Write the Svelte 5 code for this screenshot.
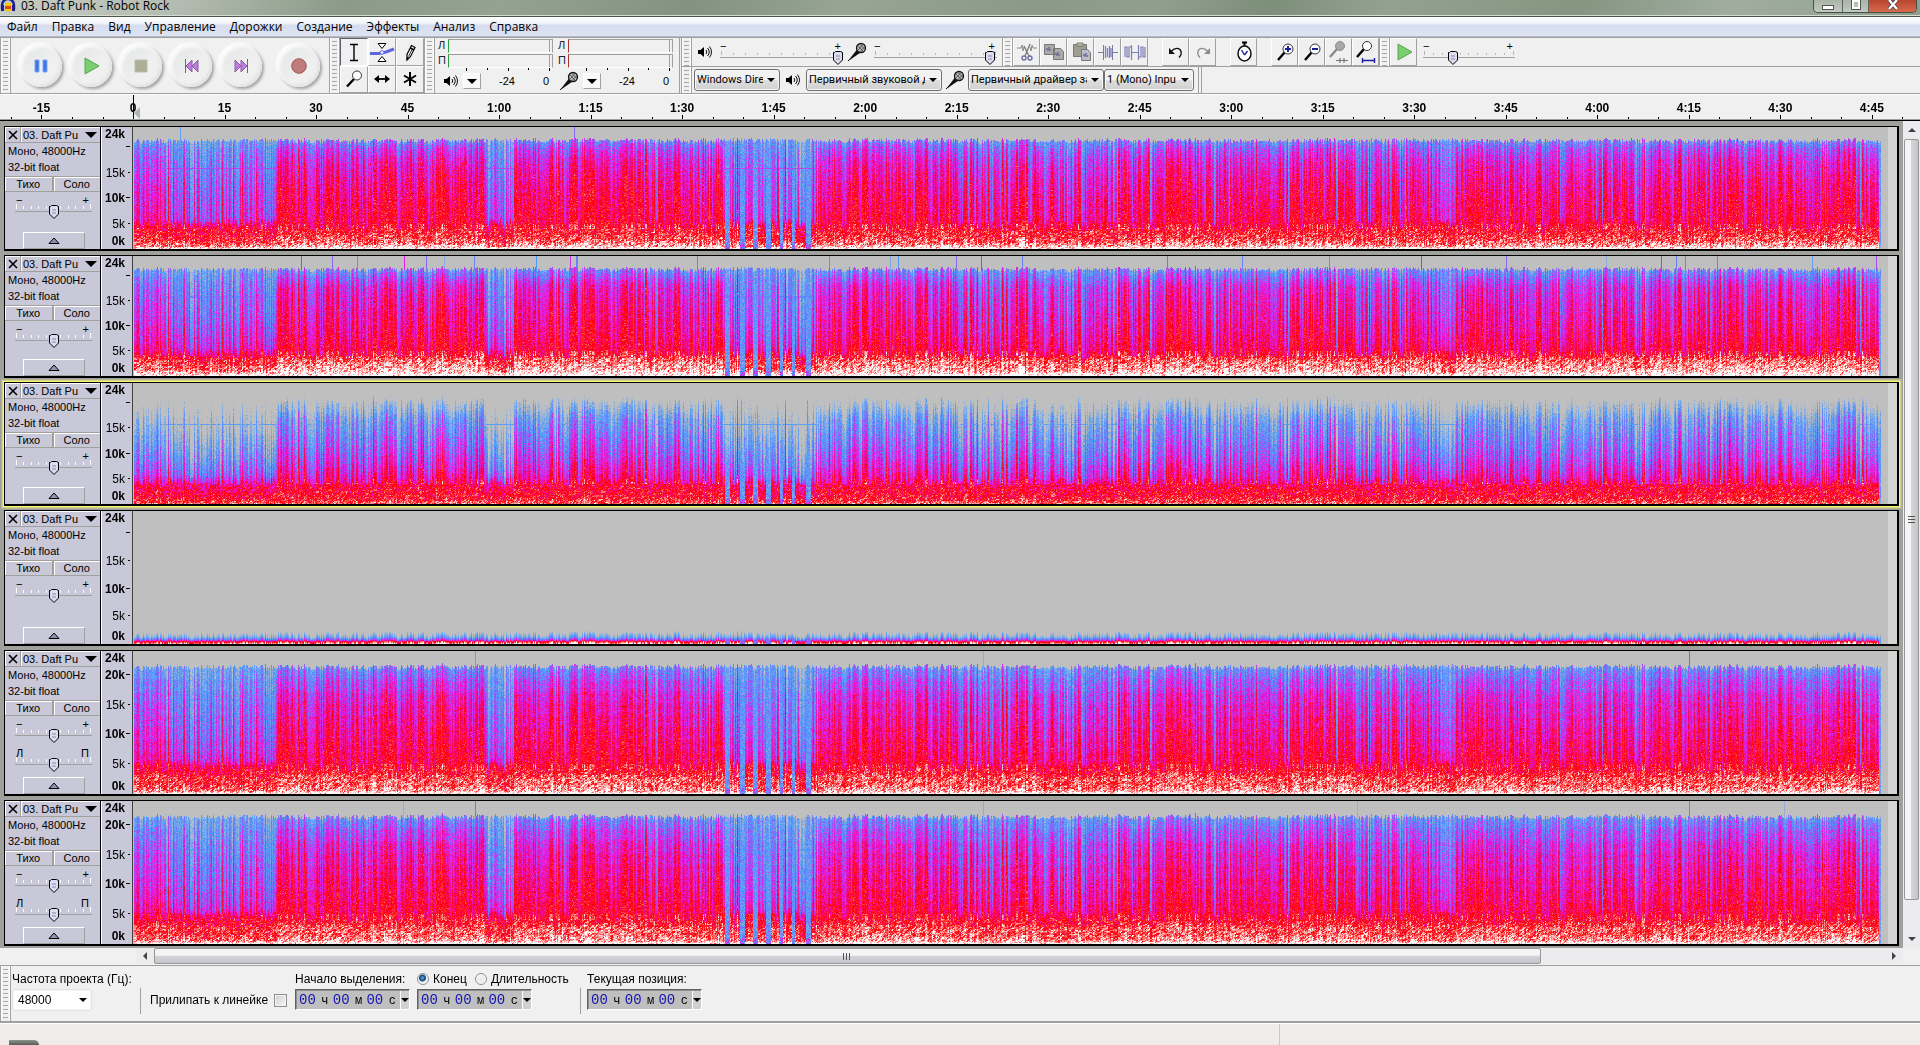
<script lang="ts">
  type Curve = [number, number][];
  type Profile = { loud: Curve; quiet: Curve; gain: number; lowGain: number; grain: number; hum: number; bands: number; cut: number };
  type Track = { id: number; height: number; profile: Profile; pan: boolean; focused?: boolean; marks: [number, number][] };

  const menus = ['Файл', 'Правка', 'Вид', 'Управление', 'Дорожки', 'Создание', 'Эффекты', 'Анализ', 'Справка'];

  const transport = [
    { name: 'Пауза', icon: 'pause' },
    { name: 'Воспроизвести', icon: 'play' },
    { name: 'Остановить', icon: 'stop' },
    { name: 'К началу', icon: 'start' },
    { name: 'К концу', icon: 'end' },
    { name: 'Записать', icon: 'record' },
  ];

  const tools = [
    { name: 'Выделение', icon: 'ibeam' },
    { name: 'Огибающая', icon: 'envelope' },
    { name: 'Карандаш', icon: 'pencil' },
    { name: 'Масштаб', icon: 'lens' },
    { name: 'Перемещение', icon: 'shift' },
    { name: 'Мультиинструмент', icon: 'multi' },
  ];

  const editGroups = [
    [
      { name: 'Вырезать', icon: 'cut' },
      { name: 'Копировать', icon: 'copy' },
      { name: 'Вставить', icon: 'paste' },
      { name: 'Обрезать', icon: 'trim' },
      { name: 'Заглушить', icon: 'silence' },
    ],
    [
      { name: 'Отменить', icon: 'undo' },
      { name: 'Повторить', icon: 'redo' },
    ],
    [{ name: 'Синхронизация', icon: 'sync' }],
    [
      { name: 'Приблизить', icon: 'zoomin' },
      { name: 'Отдалить', icon: 'zoomout' },
      { name: 'Уместить выделение', icon: 'fitsel' },
      { name: 'Уместить проект', icon: 'fit' },
    ],
  ];

  const main: Profile = {
    loud: [[0, 1.05], [0.4, 0.97], [1.2, 0.85], [3.5, 0.77], [5, 0.71], [9, 0.67], [13, 0.61], [17, 0.53], [20, 0.4], [21.3, 0.27]],
    quiet: [[0, 1.05], [0.5, 0.85], [2, 0.74], [4.6, 0.68], [5.6, 0.38], [12, 0.31], [16, 0.25], [21.3, 0.17]],
    gain: 0.17, lowGain: 0.05, grain: 0.14, hum: 0.24, bands: 0, cut: 21.3,
  };
  const bright: Profile = {
    loud: [[0, 1.05], [1, 0.94], [3.4, 0.85], [4.2, 0.73], [9, 0.63], [14, 0.57], [18, 0.5], [20, 0.36], [21.3, 0.26]],
    quiet: [[0, 1.05], [1, 0.82], [3.6, 0.71], [5.4, 0.45], [12, 0.29], [21.3, 0.17]],
    gain: 0.19, lowGain: 0.05, grain: 0.13, hum: 0.1, bands: 0, cut: 21.3,
  };
  const soft: Profile = {
    loud: [[0, 0.85], [1, 0.75], [3.5, 0.71], [5, 0.59], [9, 0.44], [13, 0.32], [17, 0.2], [20, -0.02], [21, -0.22]],
    quiet: [[0, 0.85], [1, 0.72], [4, 0.58], [5.4, 0.32], [9, 0.16], [13, 0.02], [21, -0.3]],
    gain: 0.22, lowGain: 0.04, grain: 0.13, hum: 0.04, bands: 0, cut: 21,
  };
  const bass: Profile = {
    loud: [[0, 0.95], [0.45, 0.72], [0.7, 0.42], [1.2, 0.16], [2, -0.05], [3, -0.5]],
    quiet: [[0, 0.95], [0.45, 0.68], [0.7, 0.38], [1.2, 0.13], [2, -0.1], [3, -0.5]],
    gain: 0.22, lowGain: 0.22, grain: 0.05, hum: 0, bands: 0, cut: 3,
  };
  const banded: Profile = {
    loud: [[0, 1.05], [0.5, 0.9], [3.2, 0.81], [4, 0.73], [8, 0.66], [12, 0.59], [16, 0.52], [20, 0.35], [21.3, 0.24]],
    quiet: [[0, 1.05], [0.5, 0.8], [3.2, 0.73], [4.6, 0.66], [5.8, 0.42], [10, 0.31], [21.3, 0.14]],
    gain: 0.16, lowGain: 0.05, grain: 0.13, hum: 0.04, bands: 0.02, cut: 21.3,
  };

  const tracks: Track[] = [
    { id: 1, height: 125, profile: main, pan: false, marks: [[46, 0.2], [440, 0.35]] },
    {
      id: 2, height: 123, profile: bright, pan: false,
      marks: [[167, 0.45], [198, 0.35], [223, 0.25], [270, 0.5], [292, 0.35], [310, 0.12], [340, 0.3], [402, 0.25], [436, 0.45], [442, 0.3], [563, 0.3],
        [695, 0.25], [756, 0.15], [764, 0.25], [822, 0.35], [847, 0.45], [888, 0.3], [893, 0.5], [1017, 0.2], [1033, 0.35], [1108, 0.3], [1195, 0.25],
        [1287, 0.5], [1372, 0.35], [1472, 0.12], [1527, 0.45], [1542, 0.3], [1551, 0.3], [1583, 0.3], [1678, 0.2], [1742, 0.4]],
    },
    { id: 3, height: 124, profile: soft, pan: false, focused: true, marks: [] },
    { id: 4, height: 136, profile: bass, pan: false, marks: [] },
    { id: 5, height: 146, profile: banded, pan: true, marks: [[341, 0.2], [849, 0.12], [1555, 0.4]] },
    { id: 6, height: 146, profile: banded, pan: true, marks: [[269, 0.1], [341, 0.35], [849, 0.12], [1223, 0.1], [1555, 0.3], [1650, 0.1]] },
  ];

  // clip length in analysis columns and in seconds
  const COLUMNS = 1747;
  const SECONDS = 286.5;

  const sections = [
    { to: 27, level: 0.6, spikes: 0.12, dips: 0 },
    { to: 126, level: 0.08, spikes: 0.26, dips: 0 },
    { to: 142, level: 0.2, spikes: 0, dips: 0 },
    { to: 352, level: 1, spikes: 0.14, dips: 0.05 },
    { to: 380, level: 0.2, spikes: 0, dips: 0 },
    { to: 589, level: 1, spikes: 0.14, dips: 0.05 },
    { to: 684, level: 0.16, spikes: 0.12, dips: 0 },
    { to: 796, level: 0.94, spikes: 0.12, dips: 0.05 },
    { to: 996, level: 0.9, spikes: 0.16, dips: 0.27 },
    { to: 1216, level: 0.98, spikes: 0.12, dips: 0.06 },
    { to: 1306, level: 0.8, spikes: 0.14, dips: 0.36 },
    { to: 1322, level: 0.2, spikes: 0, dips: 0 },
    { to: 1426, level: 0.96, spikes: 0.12, dips: 0.06 },
    { to: 1522, level: 0.86, spikes: 0.14, dips: 0.27 },
    { to: COLUMNS, level: 0.98, spikes: 0.14, dips: 0.05 },
  ];
  const breaks = [593, 608, 621, 634, 647, 659, 674];

  const stops = [
    [191, 191, 191],
    [77, 153, 255],
    [230, 26, 230],
    [255, 0, 0],
    [255, 255, 255],
  ];

  function hash(a: number, b: number) {
    let n = Math.imul(a + 374761, 668265263) ^ Math.imul(b + 1013, 2246822519);
    n = Math.imul(n ^ (n >>> 13), 1274126177);
    n = Math.imul(n ^ (n >>> 15), 2246822519);
    return ((n ^ (n >>> 16)) >>> 0) / 4294967296;
  }

  function sample(curve: Curve, f: number) {
    for (let i = 1; i < curve.length; i++) {
      if (f <= curve[i][0]) {
        const [f0, v0] = curve[i - 1];
        const [f1, v1] = curve[i];
        return v0 + ((v1 - v0) * (f - f0)) / (f1 - f0);
      }
    }
    return curve[curve.length - 1][1];
  }

  function columnLevel(c: number) {
    const s = sections.find((it) => c < it.to) ?? sections[sections.length - 1];
    let level = s.level;
    if (hash(c, 11) < s.spikes) level = Math.max(level, 0.65) + 0.45 * hash(c, 12);
    else if (hash(c >> 1, 13) < s.dips) level = 0.1 + 0.5 * hash(c >> 1, 15);
    return level;
  }

  function spectrogram(canvas: HTMLCanvasElement, track: Track) {
    const w = (canvas.width = canvas.clientWidth);
    const h = (canvas.height = canvas.clientHeight);
    const ctx = canvas.getContext('2d');
    if (!ctx || !w || !h) return;
    const img = ctx.createImageData(w, h);
    const p = track.profile;
    const rows = Array.from({ length: h }, (_, y) => {
      const f = 24 * (1 - (y + 0.5) / h);
      const band = p.bands * Math.sin(f * 3.1);
      return { f, loud: sample(p.loud, f) + band, quiet: sample(p.quiet, f) + band };
    });
    for (let x = 0; x < w; x++) {
      const c = Math.floor((x / w) * COLUMNS);
      const level = columnLevel(c);
      const drift = 0.7 * hash(c, 1) + 0.4 * hash(c >> 1, 2) + 0.12 * hash(c >> 3, 3) - 0.61;
      const shift = p.cut > 5 ? Math.round((hash(c, 7) - 0.5) * 7) : 0;
      const broken = breaks.some((b) => Math.abs(c - b) < 1 + hash(b, 5) * 2);
      const tail = c > COLUMNS - 3;
      const mark = track.marks.find((m) => m[0] === c);
      const top = p.cut + drift * 1.1;
      for (let y = 0; y < h; y++) {
        const f = rows[y].f;
        const { loud, quiet } = rows[f > 0.7 ? Math.max(0, Math.min(h - 1, y + shift)) : y];
        let v = 0;
        if (f < top) {
          v = quiet + (loud - quiet) * (f < 4.5 ? Math.min(level, 1) : level);
          v += drift * 2 * (f < 4 ? p.lowGain : p.gain);
          if (f > 5) v = Math.min(v, 0.74);
          if (broken) v = Math.min(v, f < 1 ? 0.35 : 0.24);
          if (tail) v = Math.min(v, 0.22);
          // low notes smear diagonally across neighbouring columns
          const low = f < 4.2 && p.grain > 0.1 ? (hash((c + y) >> 1, y >> 1) - 0.5) * 0.2 : 0;
          v += (hash(c, y + track.id * 977) + hash(y, c + track.id * 53) - 1) * p.grain + low;
          if (Math.abs(f - 15.8) < 0.14 && level < 0.5) v = Math.max(v, 0.18 + p.hum);
        } else if (mark) {
          v = mark[1];
        }
        const t = Math.max(0, Math.min(0.9999, v)) * 4;
        const i = Math.floor(t);
        const k = t - i;
        const o = (y * w + x) * 4;
        for (let n = 0; n < 3; n++) img.data[o + n] = stops[i][n] + (stops[i + 1][n] - stops[i][n]) * k;
        img.data[o + 3] = 255;
      }
    }
    ctx.putImageData(img, 0, 0);
  }

  const timeTicks = Array.from({ length: 63 }, (_, i) => (i - 4) * 5).filter((t) => t <= 290);
  const freqs = [20, 15, 10, 5];

  function timeLabel(t: number) {
    if (t < 60) return String(t);
    return `${Math.floor(t / 60)}:${String(t % 60).padStart(2, '0')}`;
  }

  let tool = $state('ibeam');
  let endMode = $state('end');
</script>

{#snippet glyph(name: string)}
  {#if name === 'pause'}
    <svg viewBox="0 0 20 20" width="20" height="20"><path d="M4 4h4v12H4zM12 4h4v12h-4z" fill="#3d74e8" stroke="#7ea6f5" /></svg>
  {:else if name === 'play'}
    <svg viewBox="0 0 20 20" width="20" height="20"><path d="M4 2v16l14-8z" fill="#77cf6d" stroke="#5aa456" /></svg>
  {:else if name === 'stop'}
    <svg viewBox="0 0 20 20" width="20" height="20"><path d="M4 4h12v12H4z" fill="#aead98" stroke="#bdbcab" /></svg>
  {:else if name === 'start'}
    <svg viewBox="0 0 20 20" width="20" height="20"><path d="M4.500 3v14" stroke="#7c5b8a" /><path d="M11 4v12l-6-6zM17 4v12l-6-6z" fill="#c07be0" stroke="#8a5fa0" /></svg>
  {:else if name === 'end'}
    <svg viewBox="0 0 20 20" width="20" height="20"><path d="M16.500 3v14" stroke="#7c5b8a" /><path d="M4 4v12l6-6zM10 4v12l6-6z" fill="#c07be0" stroke="#8a5fa0" /></svg>
  {:else if name === 'record'}
    <svg viewBox="0 0 20 20" width="20" height="20"><circle cx="10" cy="10" r="7.300" fill="#bf7c7c" stroke="#a05555" /></svg>
  {:else if name === 'ibeam'}
    <svg viewBox="0 0 24 24" width="24" height="24"><path d="M8 4.500h8M8 20.500h8M12 4.500v16" stroke="#000" stroke-width="1.400" fill="none" /></svg>
  {:else if name === 'envelope'}
    <svg viewBox="0 0 26 24" width="26" height="24"><path d="M1 13.500h9l7-1.500 8-3" stroke="#5f66dd" stroke-width="3" fill="none" /><path d="M9 3.500h8l-4 5zM9 21.500h8l-4-5z" fill="#fff" stroke="#000" /><circle cx="13" cy="12.500" r="1.800" fill="#fff" stroke="#5f66dd" /></svg>
  {:else if name === 'pencil'}
    <svg viewBox="0 0 24 24" width="24" height="24"><path d="M13.500 5.500l3.500 2-4.500 9-3.500 3.500v-5.500z" fill="#fff" stroke="#000" stroke-width="1.200" /><path d="M12.500 8l3.500 2M9 19.500l1-2.500" stroke="#000" stroke-width="1.500" /><path d="M14 9.500l-3.500 7" stroke="#000" stroke-width=".8" /></svg>
  {:else if name === 'lens'}
    <svg viewBox="0 0 24 24" width="24" height="24"><path d="M5 19.500l7-7.500" stroke="#000" stroke-width="2.400" /><circle cx="15" cy="8.500" r="4.500" fill="#fff" stroke="#333" /></svg>
  {:else if name === 'shift'}
    <svg viewBox="0 0 24 24" width="24" height="24"><path d="M5 12h14" stroke="#000" stroke-width="1.800" /><path d="M9 8l-5 4 5 4zM15 8l5 4-5 4z" /></svg>
  {:else if name === 'multi'}
    <svg viewBox="0 0 24 24" width="24" height="24"><path d="M12 5v14M6 8.500l12 7M6 15.500l12-7" stroke="#000" stroke-width="2" /></svg>
  {:else if name === 'speaker'}
    <svg viewBox="0 0 16 16" width="16" height="16"><path d="M1 6h2.500L7 3v10L3.500 10H1z" /><path d="M9 6q1.500 2 0 4M10.500 4q3.500 4 0 8M12.500 2.500q4 5.500 0 11" stroke="#111" fill="none" /></svg>
  {:else if name === 'mic'}
    <svg viewBox="0 0 20 20" width="20" height="20"><path d="M1 19l9-11.500 3.500 3-10 7z" fill="#111" /><path d="M1 19l3-3" stroke="#111" /><circle cx="14" cy="6" r="4.500" fill="#bbb" stroke="#111" stroke-width="1.300" /><path d="M11 4l5 5M13 2.500l5 5M11 8l5-5.500M13 9.500l5-5" stroke="#333" stroke-width=".7" /></svg>
  {:else if name === 'cut'}
    <svg viewBox="0 0 24 24" width="24" height="24"><path d="M2 8h4l1-3 1 6 1-4 1 1M22 8h-4l-1-3-1 6-1-4" stroke="#8a8a8a" fill="none" /><path d="M15 4l-5 12M9 6l5 10" stroke="#777" stroke-width="1.300" /><circle cx="9" cy="18" r="2" fill="none" stroke="#6d6da8" stroke-width="1.400" /><circle cx="15" cy="18" r="2" fill="none" stroke="#6d6da8" stroke-width="1.400" /></svg>
  {:else if name === 'copy'}
    <svg viewBox="0 0 24 24" width="24" height="24"><path d="M2.500 4.500h10v10h-10zM11.500 8.500h7l3 3v8h-10z" fill="#a9a9a9" stroke="#777" /><path d="M4 10l1-2 1 3 1-4 1 4 1-2M13 15l1-2 1 3 1-4 1 4 1-2" stroke="#666b99" fill="none" stroke-width=".9" /></svg>
  {:else if name === 'paste'}
    <svg viewBox="0 0 24 24" width="24" height="24"><path d="M4.500 4.500h13v12h-13z" fill="#9d9d92" stroke="#777" /><path d="M8 3h6v3H8z" fill="#c9c09a" stroke="#777" /><path d="M12.500 9.500h6l3 3v8h-9z" fill="#bcbcc8" stroke="#777" /><path d="M14 16l1-2 1 3 1-4 1 4 1-2" stroke="#666b99" fill="none" stroke-width=".9" /></svg>
  {:else if name === 'trim'}
    <svg viewBox="0 0 24 24" width="24" height="24"><path d="M2 12.500h5M17 12.500h5M7.500 5v15M16.500 5v15" stroke="#7a7a9a" /><path d="M9.500 6v12M11.500 8v9M13.500 6v12M15 8v9" stroke="#8080c4" stroke-width="1.300" /></svg>
  {:else if name === 'silence'}
    <svg viewBox="0 0 24 24" width="24" height="24"><path d="M2 17V7h2v10h2V7h2M8.500 5v15M8 12.500h8M15.500 5v15M16 17h2V7h2v10h2V7" stroke="#7d7db4" fill="none" stroke-width="1.200" /></svg>
  {:else if name === 'undo'}
    <svg viewBox="0 0 24 24" width="24" height="24"><path d="M7 11.500q5-5 9-2 3 4-1 8" stroke="#111" stroke-width="1.400" fill="none" /><path d="M5 8v6h6z" fill="#111" /></svg>
  {:else if name === 'redo'}
    <svg viewBox="0 0 24 24" width="24" height="24"><path d="M17 11.500q-5-5-9-2-3 4 1 8" stroke="#8a8a8a" stroke-width="1.400" fill="none" /><path d="M19 8v6h-6z" fill="#8a8a8a" /></svg>
  {:else if name === 'sync'}
    <svg viewBox="0 0 24 24" width="24" height="24"><path d="M10 2.500h5M12.500 2v4" stroke="#000" stroke-width="2" /><ellipse cx="12.500" cy="13.500" rx="6.500" ry="7.500" fill="#fff" stroke="#111" stroke-width="1.500" /><path d="M12.500 15l-3-5M12.500 15l3-4" stroke="#22229a" stroke-width="1.400" /></svg>
  {:else if name === 'zoomin' || name === 'zoomout'}
    <svg viewBox="0 0 24 24" width="24" height="24"><path d="M5 20l7-8" stroke="#000" stroke-width="2.400" /><circle cx="15" cy="9" r="5" fill="#fff" stroke="#333" /><path d={name === 'zoomin' ? 'M12 9h6M15 6v6' : 'M12 9h6'} stroke="#1c1c9c" stroke-width="2" /></svg>
  {:else if name === 'fitsel'}
    <svg viewBox="0 0 24 24" width="24" height="24"><path d="M3 17l7-8" stroke="#8a8a8a" stroke-width="2.400" /><circle cx="13" cy="6" r="4.500" fill="#a8a8a8" stroke="#8a8a8a" /><path d="M9 20.500h12M13 18v5M17 18v5" stroke="#777" stroke-width="1.200" /></svg>
  {:else if name === 'fit'}
    <svg viewBox="0 0 24 24" width="24" height="24"><path d="M3 17l7-8" stroke="#000" stroke-width="2.400" /><circle cx="13" cy="6" r="4.500" fill="#fff" stroke="#333" /><path d="M9 20.500h11M8.500 18v5M20.500 18v5" stroke="#1c1c9c" stroke-width="1.400" /></svg>
  {/if}
{/snippet}

{#snippet slider(label: string, value: number, left: string, right: string)}
  <div class="slider">
    <div class="ends"><span>{left}</span><span>{right}</span></div>
    <div class="ticks">{#each { length: 11 } as _}<i></i>{/each}</div>
    <input type="range" min="0" max="100" {value} aria-label={label} />
  </div>
{/snippet}

{#snippet combo(label: string, text: string, cls: string)}
  <span class="combo {cls}">
    <select aria-label={label}><option>{text}</option></select>
  </span>
{/snippet}

{#snippet timeBox(label: string)}
  <div class="time" role="group" aria-label={label}>
    {#each ['ч', 'м', 'с'] as unit}
      <input value="00" size="2" aria-label="{label} {unit}" /><span>{unit}</span>
    {/each}
    <button aria-label="Формат"></button>
  </div>
{/snippet}

<div class="app">
  <!-- Title -->
  <header class="title">
    <svg viewBox="0 0 16 14" width="16" height="14">
      <path d="M2 9V5a6 6 0 0 1 12 0v4" fill="none" stroke="#1b1f8f" stroke-width="2.500" />
      <path d="M5 3h6v8H5z" fill="#f5c400" /><path d="M5 6h6v3H5z" fill="#e0481c" />
      <path d="M1 5h3v6H1zM12 5h3v6h-3z" fill="#1b1f8f" />
    </svg>
    <h1>03. Daft Punk - Robot Rock</h1>
    <div class="window-buttons">
      <button class="min" aria-label="Свернуть"><i></i></button>
      <button class="max" aria-label="Развернуть"><i></i></button>
      <button class="close" aria-label="Закрыть">
        <svg viewBox="0 0 14 12" width="14" height="12"><path d="M3 0l8 9M11 0L3 9" stroke="#444" stroke-width="4" /><path d="M3 0l8 9M11 0L3 9" stroke="#fff" stroke-width="2.400" /></svg>
      </button>
    </div>
  </header>

  <nav class="menu">
    {#each menus as item}<button>{item}</button>{/each}
  </nav>

  <!-- Toolbars -->
  <div class="toolbars">
    <div class="grip"></div>
    <div class="transport">
      {#each transport as b}
        <button class:record={b.icon === 'record'} aria-label={b.name}>{@render glyph(b.icon)}</button>
      {/each}
    </div>
    <div class="grip"></div>
    <div class="tools">
      {#each tools as t}
        <button class="flat" class:pressed={tool === t.icon} aria-label={t.name} onclick={() => (tool = t.icon)}>
          {@render glyph(t.icon)}
        </button>
      {/each}
    </div>
    <div class="grip"></div>
    <div class="meters">
      {#each ['speaker', 'mic'] as kind}
        <div class="meter {kind}">
          <div class="channel"><span>Л</span><i></i></div>
          <div class="channel"><span>П</span><i></i></div>
          <div class="meter-ticks">{#each { length: 5 } as _}<i></i>{/each}</div>
          <div class="meter-foot">
            {@render glyph(kind)}
            <button class="drop" aria-label="Параметры уровня"></button>
            <span>-24</span><span>0</span>
          </div>
        </div>
      {/each}
    </div>
    <div class="stack">
      <div class="row">
        <div class="grip"></div>
        <div class="mixer">
          {@render glyph('speaker')}
          {@render slider('Громкость воспроизведения', 100, '−', '+')}
          {@render glyph('mic')}
          {@render slider('Громкость записи', 98, '−', '+')}
        </div>
        <div class="grip"></div>
        {#each editGroups as group}
          <div class="group">
            {#each group as b}
              <button class="flat" aria-label={b.name}>{@render glyph(b.icon)}</button>
            {/each}
          </div>
        {/each}
        <div class="grip"></div>
        <button class="flat" aria-label="Воспроизвести с заданной скоростью">{@render glyph('play')}</button>
        <div class="speed">{@render slider('Скорость', 30, '−', '+')}</div>
      </div>
      <div class="row">
        <div class="grip"></div>
        <div class="devices">
          {@render combo('Интерфейс', 'Windows Dire', 'host')}
          {@render glyph('speaker')}
          {@render combo('Устройство вывода', 'Первичный звуковой драйвер', 'device')}
          {@render glyph('mic')}
          {@render combo('Устройство ввода', 'Первичный драйвер записи звука', 'device')}
          {@render combo('Каналы', '1 (Mono) Inpu', 'chan')}
        </div>
      </div>
    </div>
  </div>

  <!-- Timeline -->
  <div class="timeline">
    <div class="scale">
      {#each timeTicks as t}
        <i class:major={t % 15 === 0} style="left:{(t / SECONDS) * 100}%"></i>
        {#if t % 15 === 0}<span style="left:{(t / SECONDS) * 100}%">{timeLabel(t)}</span>{/if}
      {/each}
      <b class="cursor"></b>
    </div>
  </div>

  <!-- Tracks -->
  <div class="workspace">
    <div class="tracks">
      {#each tracks as track (track.id)}
        <section class="track" class:focused={track.focused} style="height:{track.height}px">
          <div class="panel">
            <div class="head">
              <button class="x" aria-label="Закрыть дорожку">
                <svg viewBox="0 0 10 10" width="10" height="10"><path d="M1 1l8 8M9 1L1 9" stroke="#000" stroke-width="1.600" /></svg>
              </button>
              <button class="name">03. Daft Pu<i></i></button>
            </div>
            <p>Моно, 48000Hz</p>
            <p>32-bit float</p>
            <div class="toggles"><button>Тихо</button><button>Соло</button></div>
            {@render slider('Усиление', 50, '−', '+')}
            {#if track.pan}{@render slider('Панорама', 50, 'Л', 'П')}{/if}
            <button class="collapse" aria-label="Свернуть дорожку">
              <svg viewBox="0 0 12 7" width="12" height="7"><path d="M1 6.500L6 1l5 5.500z" fill="#8f8fb8" stroke="#000" /></svg>
            </button>
          </div>
          <div class="vruler">
            <span class="top">24k</span>
            {#each freqs as f}
              <span class="mark" class:strong={f % 10 === 0} style="top:{(1 - f / 24) * 100}%">
                {#if f !== 20 || track.height > 140}{f}k{/if}<i></i>
              </span>
            {/each}
            <span class="bottom">0k</span>
          </div>
          <canvas use:spectrogram={track}></canvas>
          <div class="after"></div>
        </section>
      {/each}
    </div>
    <div class="vscroll">
      <button aria-label="Вверх"><i class="up"></i></button>
      <div class="thumb"><i></i></div>
      <button aria-label="Вниз"><i class="down"></i></button>
    </div>
  </div>
  <div class="hscroll">
    <button aria-label="Влево"><i class="left"></i></button>
    <div class="rail"><div class="thumb"><i></i></div></div>
    <button aria-label="Вправо"><i class="right"></i></button>
  </div>

  <!-- Selection bar -->
  <div class="selection">
    <div class="grip"></div>
    <div class="field rate">
      <label for="rate">Частота проекта (Гц):</label>
      <span class="combo white"><select id="rate"><option>48000</option></select></span>
    </div>
    <div class="rule"></div>
    <label class="snap">Прилипать к линейке <input type="checkbox" /></label>
    <div class="field">
      <span>Начало выделения:</span>
      {@render timeBox('Начало выделения')}
    </div>
    <div class="field until">
      <div class="radios">
        <label><input type="radio" value="end" bind:group={endMode} />Конец</label>
        <label><input type="radio" value="length" bind:group={endMode} />Длительность</label>
      </div>
      {@render timeBox('Конец выделения')}
    </div>
    <div class="rule"></div>
    <div class="field">
      <span>Текущая позиция:</span>
      {@render timeBox('Текущая позиция')}
    </div>
  </div>
  <footer class="status"><div class="orb"></div><div class="cell"></div></footer>
</div>

<style>
  :global(body) { background: #f0f0f0; overflow: hidden; }
  .app {
    min-height: 100vh;
    display: flex;
    flex-direction: column;
    background: #f0f0f0;
    color: #000;
    font: 12px/14px 'Open Sans', 'Noto Sans', sans-serif;
  }
  button {
    font: inherit;
    color: inherit;
    padding: 0;
    margin: 0;
    border: 0;
    background: none;
    display: flex;
    align-items: center;
    justify-content: center;
  }
  svg { display: block; flex: none; }

  /* Title */
  .title {
    height: 17px;
    box-sizing: border-box;
    display: flex;
    align-items: flex-start;
    padding-right: 3px;
    border-bottom: 1px solid #49574a;
    box-shadow: inset 0 -1px #d3dbd2;
    background: linear-gradient(115deg, #c6ccc4 0, #b4bdb2 9%, #8b9b88 18%, #94a390 26%, #82937f 36%, #97a592 44%, #8a9a86 54%, #90a08d 60%, #7c8f79 66%, #93a290 72%, #849680 82%, #a0ada0 90%, #8fa08c 100%);
  }
  h1 { margin: 0 0 0 5px; font-size: 12px; line-height: 12px; font-weight: 400; flex: 1; }
  .window-buttons {
    display: flex;
    height: 13px;
    border: 1px solid #465046;
    border-top: 0;
    border-radius: 0 0 5px 5px;
    overflow: hidden;
    box-sizing: border-box;
  }
  .window-buttons button { border-right: 1px solid #5d665d; background: linear-gradient(#a9b3a7, #c1cabf); }
  .window-buttons .min { width: 29px; }
  .window-buttons .max { width: 26px; }
  .window-buttons .close { width: 47px; border: 0; background: linear-gradient(#b8452f, #d86a4c); }
  .min i { width: 10px; height: 3px; background: #fff; border: 1px solid #555; margin-top: 3px; }
  .max i { width: 4px; height: 5px; border: 2px solid #fff; outline: 1px solid #555; margin-bottom: 3px; }

  .menu {
    box-sizing: border-box;
    display: flex;
    height: 20px;
    padding-top: 1px;
    background: linear-gradient(#fff, #eef1f8 35%, #d5dcee 45%, #dee4f3);
    border-bottom: 1px solid #b4b8c4;
  }
  .menu button { padding: 0 7px; }

  /* Toolbars */
  .toolbars { display: flex; height: 55px; border-top: 1px solid #a0a0a0; border-bottom: 1px solid #a0a0a0; }
  .grip {
    flex: none;
    width: 5px;
    padding: 0 2px;
    border-right: 1px solid #a0a0a0;
    border-left: 1px solid #a0a0a0;
    box-shadow: inset 1px 0 #fff, inset -1px 0 #fff;
    background: repeating-linear-gradient(#f0f0f0 0 3px, #a8a8a8 3px 4px) content-box;
  }
  .transport { display: flex; align-items: center; padding: 0 5px; }
  .transport button {
    width: 42px;
    height: 42px;
    margin: 0 4px;
    border-radius: 50%;
    background: linear-gradient(135deg, #e2e4e4, #f0f0f0 60%);
    box-shadow: inset 2px 2px 3px #fbfbfb, inset -2px -2px 3px #e2e2e2, 2px 2px 3px #a2a2a2, -2px -2px 3px #fff;
  }
  .transport .record { margin-left: 12px; }
  .tools { display: grid; grid-template-columns: repeat(3, 28px); grid-template-rows: 1fr 1fr; }
  .flat { box-sizing: border-box; border: 1px solid; border-color: #fff #a0a0a0 #a0a0a0 #fff; }
  .pressed { border-color: #606070 #fff #fff #606070; }

  .meters { display: flex; padding-right: 4px; font: 11px/13px 'Liberation Sans', sans-serif; border-right: 1px solid #a0a0a0; }
  .meter { width: 120px; }
  .channel { display: flex; height: 15px; align-items: center; gap: 2px; padding-left: 3px; }
  .channel span { color: #223; width: 8px; }
  .channel i {
    flex: none;
    box-sizing: border-box;
    width: 105px;
    height: 14px;
    border: 1px solid;
    border-color: #a0a0a0 #a0a0a0 #fff #2f9e3c;
    box-shadow: inset -2px 0 #f0f0f0, inset -3px 0 #a0a0a0;
  }
  .mic .channel i { border-left-color: #b03030; }
  .meter-ticks { display: flex; justify-content: space-between; margin: 0 5px 0 31px; height: 3px; }
  .meter-ticks i { width: 1px; background: #000; height: 2px; }
  .meter-ticks i:nth-child(odd) { height: 3px; }
  .meter-foot { display: flex; align-items: center; height: 20px; padding: 0 6px 0 8px; gap: 4px; }
  .meter-foot span { flex: 1; text-align: right; }
  .meter.mic .meter-foot { padding-left: 4px; }
  .drop { width: 18px; height: 16px; background: #fafafa; border: 1px solid; border-color: #fff #a0a0a0 #a0a0a0 #fff; }
  .drop::before { content: ''; border: 5px solid transparent; border-top-color: #000; border-bottom: 0; }

  .stack { flex: 1; display: flex; flex-direction: column; margin-left: 1px; }
  .row { display: flex; flex: 1; }
  .row:first-child { border-bottom: 1px solid #a0a0a0; }
  .row .flat { width: 27px; }
  .mixer { display: flex; align-items: center; gap: 6px; padding: 0 4px 0 5px; }
  .mixer .slider { width: 125px; }
  .mixer .slider + :global(svg) { margin-left: -3px; }
  .group { display: flex; }
  .group + .group { margin-left: 14px; }
  .speed { width: 94px; margin-left: 5px; }
  .devices { display: flex; align-items: center; padding: 0 4px 0 2px; border-right: 1px solid #a0a0a0; box-shadow: 2px 0 #f0f0f0, 3px 0 #a0a0a0; }
  .devices > :global(svg) { margin: 0 5px; }
  .devices > .device + :global(svg) { margin: 0 3px; }

  .combo { position: relative; display: flex; }
  .combo::after {
    content: '';
    position: absolute;
    right: 5px;
    top: 9px;
    border: 4px solid transparent;
    border-top-color: #000;
    border-bottom: 0;
    pointer-events: none;
  }
  .combo select {
    appearance: none;
    width: 100%;
    height: 22px;
    padding: 0 16px 0 2px;
    font: 11px/18px Roboto, 'Noto Sans', sans-serif;
    color: #000;
    border: 1px solid #707070;
    border-radius: 3px;
    background: linear-gradient(#f2f2f2 0 50%, #dedede 50%, #d0d0d0);
    box-shadow: inset 0 0 0 1px #f6f6f6;
  }
  .host { width: 86px; }
  .device { width: 136px; }
  .chan { width: 90px; }
  .white { width: 80px; }
  .combo.white select { background: #fff; border-color: #e2e2e2; font: 12px/18px 'Liberation Sans', sans-serif; padding-left: 5px; }

  /* Sliders */
  .slider { display: grid; grid-template-rows: 7px 8px 8px; align-content: start; font: 11px/7px 'Liberation Sans', sans-serif; }
  .ends { grid-area: 1 / 1; display: flex; justify-content: space-between; padding: 0 3px 0 1px; }
  .ticks { grid-area: 2 / 1; display: flex; justify-content: space-between; align-items: flex-end; margin: 0 1px; padding: 0 1px 2px; border-bottom: 1px solid #a0a0a0; }
  .ticks i { width: 1px; height: 2px; background: #b8b8b8; }
  .ticks i:first-child, .ticks i:last-child { height: 4px; }
  .slider input {
    grid-area: 1 / 1 / 4 / 2;
    align-self: end;
    appearance: none;
    width: 100%;
    height: 16px;
    margin: 0;
    background: none;
  }
  .slider input::-webkit-slider-thumb {
    appearance: none;
    width: 12px;
    height: 15px;
    background: url("data:image/svg+xml,%3Csvg xmlns='http://www.w3.org/2000/svg' viewBox='0 0 12 15'%3E%3Cpath d='M2.500 1.500l1-1h5l2 1v7.500l-4.500 4.500-4.500-4.500v-7.500z' fill='%23dcdcf0' stroke='%23000'/%3E%3Cpath d='M4 5h4M4 8h4' stroke='%238888a8'/%3E%3C/svg%3E") center no-repeat;
  }
  .row .slider { margin-top: 5px; }

  /* Timeline */
  .timeline { height: 25px; border-top: 1px solid #fff; border-bottom: 1px solid #000; box-shadow: inset 0 -1px #a0a0a0; overflow: hidden; }
  .scale { position: relative; height: 24px; margin: 0 39px 0 133px; font: bold 12px/14px 'Liberation Sans', sans-serif; }
  .scale i { position: absolute; bottom: 0; width: 1px; height: 2px; background: #000; }
  .scale i.major { height: 4px; }
  .scale span { position: absolute; top: 6px; transform: translateX(-50%); }
  .cursor { position: absolute; left: 0; top: 0; height: 24px; border-left: 1px solid #000; }
  .cursor::after { content: ''; position: absolute; left: 0; bottom: 0; border: 6px solid transparent; border-right-color: #a9b8a9; border-left: 0; }

  /* Tracks */
  .workspace { display: flex; }
  .tracks { flex: 1; min-width: 0; background: #a0a09d; padding: 5px 4px 2px; display: flex; flex-direction: column; gap: 4px; }
  .track {
    box-sizing: border-box;
    display: flex;
    border: 1px solid #000;
    border-width: 1px 2px 2px 1px;
    background: #bfbfbf;
  }
  .focused { box-shadow: 0 0 0 1px #f9f970, 0 0 0 2px #d2d28a, 0 0 0 3px #b4b494; }
  .panel {
    box-sizing: border-box;
    width: 96px;
    border-right: 1px solid #000;
    background: #c8c8d8;
    font: 11px/16px 'Liberation Sans', sans-serif;
    display: flex;
    flex-direction: column;
  }
  .head { display: flex; height: 15px; border-bottom: 1px solid #a0a09d; }
  .head button { box-shadow: inset 1px 1px #fff; }
  .x { width: 16px; border-right: 1px solid #a0a09d; }
  .name { flex: 1; justify-content: space-between; padding: 0 3px 0 2px; }
  .name i { border: 6px solid transparent; border-top-color: #000; border-bottom: 0; }
  .panel p { margin: 0 0 0 3px; }
  .toggles { display: flex; height: 14px; gap: 2px; background: #a0a09d; border: 1px solid #a0a09d; border-width: 1px 0; margin-top: 1px; }
  .toggles button { flex: 1; background: #c8c8d8; box-shadow: inset 1px 1px #fff; }
  .panel .slider { margin: 5px 8px 0 10px; }
  .panel .slider + .slider { margin-top: 6px; }
  .panel .ticks { margin: 0; }
  .panel .ticks i { background: #fff; height: 3px; }
  .panel .ticks i:first-child, .panel .ticks i:last-child { height: 5px; }
  .collapse { margin: auto 15px 0 18px; height: 17px; box-sizing: border-box; border: 1px solid; border-color: #fff #a0a0a0 #a0a0a0 #fff; }

  .vruler { position: relative; width: 32px; box-sizing: border-box; background: #c8c8d8; border-right: 1px solid #404040; border-left: 1px solid #fff; font: 12px/14px 'Liberation Sans', sans-serif; }
  .vruler span { position: absolute; right: 7px; }
  .vruler .top { top: 0; font-weight: 700; }
  .vruler .bottom { bottom: 1px; font-weight: 700; }
  .vruler .mark { right: 0; padding-right: 7px; height: 14px; transform: translateY(-50%); }
  .vruler .strong { font-weight: 700; }
  .mark i { position: absolute; right: 2px; top: 6px; width: 2px; height: 1px; background: #000; }
  .strong i { width: 4px; }
  canvas { flex: 1; min-width: 0; width: 0; height: 100%; margin-left: 1px; display: block; }
  .after { width: 16px; background: linear-gradient(90deg, #bfbfbf 7px, #d4d4d4 7px); }

  /* Scrollbars */
  .vscroll { width: 17px; display: flex; flex-direction: column; background: #ececee; }
  .vscroll button { height: 18px; }
  .vscroll .thumb { flex: 1; margin: 0 1px 30px; background: linear-gradient(90deg, #f5f5f5 45%, #d4d4d8 50%, #c4c4ca); border: 1px solid #979797; border-radius: 2px; display: flex; align-items: center; justify-content: center; }
  .vscroll .thumb i { width: 7px; height: 8px; background: repeating-linear-gradient(#555 0 1px, transparent 1px 3px); }
  .hscroll { display: flex; height: 16px; margin: 0 17px 1px 136px; background: #ececee; }
  .hscroll button { width: 18px; }
  .rail { flex: 1; display: flex; }
  .hscroll .thumb { width: 80%; background: linear-gradient(#f5f5f5 45%, #d4d4d8 50%, #c4c4ca); border: 1px solid #979797; border-radius: 2px; display: flex; align-items: center; justify-content: center; }
  .hscroll .thumb i { width: 8px; height: 7px; background: repeating-linear-gradient(90deg, #555 0 1px, transparent 1px 3px); }
  .up, .down { border: 4px solid transparent; }
  .up { border-bottom-color: #444; border-top: 0; }
  .down { border-top-color: #444; border-bottom: 0; }
  .left, .right { border: 4px solid transparent; }
  .left { border-right-color: #444; border-left: 0; }
  .right { border-left-color: #444; border-right: 0; }

  /* Selection bar */
  .selection {
    display: flex;
    height: 55px;
    border-top: 1px solid #a0a0a0;
    border-bottom: 2px solid #a0a0a0;
    font: 12px/20px 'Liberation Sans', sans-serif;
  }
  .field { display: grid; grid-template-rows: 20px 22px; align-content: start; padding-top: 3px; margin: 0 0 0 5px; }
  .rate { margin-left: 1px; width: 122px; }
  .until { margin-left: 7px; min-width: 157px; }
  .rule { width: 1px; height: 26px; margin: 22px 1px 0 6px; background: #a0a0a0; }
  .snap { display: flex; align-items: center; gap: 6px; height: 22px; margin: 23px 3px 0 8px; }
  .snap input { appearance: none; width: 13px; height: 13px; margin: 0; border: 1px solid #8e8f8f; background: linear-gradient(135deg, #cdd0d6, #f6f6f6); box-shadow: inset 0 0 0 1px #f4f4f4; }
  .radios { display: flex; gap: 8px; }
  .radios label { display: flex; align-items: center; gap: 4px; }
  .radios input { appearance: none; width: 12px; height: 12px; margin: 0; border: 1px solid #8e8f8f; border-radius: 50%; background: radial-gradient(#e8e8e8, #fafafa); }
  .radios input:checked { background: radial-gradient(circle at 45% 40%, #5fb0e8 0, #12407c 3px, #f4f4f4 4px); }
  .time {
    display: flex;
    align-items: center;
    box-sizing: border-box;
    width: 115px;
    height: 21px;
    padding-left: 3px;
    background: #bfbfbf;
    border: 1px solid;
    border-color: #606060 #fff #fff #606060;
    box-shadow: inset 1px 1px #909090;
  }
  .time input { width: 18px; padding: 0; border: 0; background: none; color: #1414b4; font: 14px/18px 'Liberation Mono', monospace; }
  .time span { flex: 1; text-align: center; font: 12px/18px 'Liberation Mono', monospace; padding-top: 2px; }
  .time button { width: 9px; height: 18px; background: #d0d0d0; border-left: 1px solid #fff; }
  .time button::before { content: ''; border: 4px solid transparent; border-top-color: #000; border-bottom: 0; }

  .status { flex: 1; min-height: 20px; display: flex; background: #f0eceb; border-top: 1px solid #fff; overflow: hidden; }
  .orb { align-self: flex-end; width: 30px; height: 5px; margin-left: 9px; border-radius: 2px 14px 0 0; background: linear-gradient(#8b958b, #555c55); }
  .cell { margin-left: auto; width: 640px; border-left: 1px solid #c8c8c8; }
</style>
